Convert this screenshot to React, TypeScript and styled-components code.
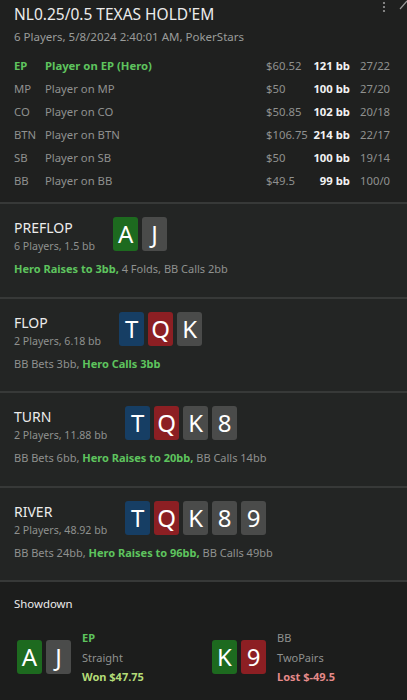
import React from "react";
import styled, { createGlobalStyle } from "styled-components";

const Global = createGlobalStyle`
  html, body { margin: 0; padding: 0; background: #1c1d1c; }
  body { font-family: "Noto Sans", "Open Sans", sans-serif; color: #e8e8e8; }
  * { box-sizing: border-box; }
`;

const Page = styled.div`
  width: 407px;
  height: 700px;
  overflow: hidden;
  background: #1c1d1c;
  display: flex;
  flex-direction: column;
`;

const Header = styled.header`
  position: relative;
  flex: none;
  background: #1f201f;
  padding: 5px 14px 0 14px;
  height: 204px;
  border-bottom: 2px solid #373938;
`;

const Title = styled.div`
  font-size: 15.5px;
  line-height: 18px;
  color: #ececec;
`;

const SubTitle = styled.div`
  font-size: 11.5px;
  line-height: 16px;
  color: #9a9c9a;
  margin-top: 6px;
`;

const Corner = styled.div`
  position: absolute;
  top: 0;
  right: 0;
  display: flex;
  align-items: flex-start;
  gap: 13px;
`;

const Table = styled.div`
  margin-top: 9px;
  display: grid;
  grid-template-columns: 31px 221px 40px 44px auto;
  grid-auto-rows: 23px;
  align-items: center;
  font-size: 11.3px;
`;

const Cell = styled.div<{ $tone?: "hero" | "dim" | "bold"; $right?: boolean; $pad?: number }>`
  color: ${(p) =>
    p.$tone === "hero" ? "#5ec45e" : p.$tone === "bold" ? "#f2f2f2" : "#8f918f"};
  font-weight: ${(p) => (p.$tone === "hero" || p.$tone === "bold" ? 700 : 400)};
  text-align: ${(p) => (p.$right ? "right" : "left")};
  padding-left: ${(p) => p.$pad ?? 0}px;
  white-space: nowrap;
`;

const Street = styled.section`
  flex: none;
  background: #232524;
  border-bottom: 2px solid #373938;
  padding: 13px 14px 0 14px;
  height: 94.5px;
`;

const StreetTop = styled.div`
  display: flex;
  align-items: flex-start;
  gap: 18px;
`;

const StreetInfo = styled.div`
  display: flex;
  flex-direction: column;
  padding-top: 2px;
`;

const StreetName = styled.div`
  font-size: 14px;
  line-height: 18px;
  color: #ececec;
`;

const StreetMeta = styled.div`
  font-size: 10.6px;
  line-height: 18px;
  color: #8f918f;
`;

const Cards = styled.div`
  display: flex;
  gap: 4px;
`;

const CardBox = styled.div<{ $c: string }>`
  width: 25px;
  height: 34px;
  border-radius: 3px;
  background: ${(p) => p.$c};
  color: #ffffff;
  font-size: 24px;
  line-height: 34px;
  text-align: center;
`;

const Action = styled.div`
  margin-top: 6px;
  font-size: 11px;
  line-height: 16px;
  color: #8f918f;
`;

const Hero = styled.span`
  color: #5ec45e;
  font-weight: 700;
`;

const Showdown = styled.section`
  background: #1c1d1c;
  flex: 1;
  padding: 14px 14px 0 14px;
`;

const ShowTitle = styled.div`
  font-size: 11.4px;
  line-height: 16px;
  color: #ececec;
`;

const ShowRow = styled.div`
  display: grid;
  grid-template-columns: 195px 1fr;
  margin-top: 16px;
  padding-left: 3px;
`;

const ShowHand = styled.div`
  display: flex;
  align-items: center;
  gap: 11px;
`;

const ShowText = styled.div`
  display: flex;
  flex-direction: column;
  font-size: 11px;
  line-height: 19.5px;
`;

const ShowLine = styled.div<{ $tone?: "hero" | "won" | "lost" }>`
  color: ${(p) =>
    p.$tone === "hero"
      ? "#5ec45e"
      : p.$tone === "won"
      ? "#b4dc78"
      : p.$tone === "lost"
      ? "#e58a8a"
      : "#8f918f"};
  font-weight: ${(p) => (p.$tone ? 700 : 400)};
`;

const COLORS: Record<string, string> = {
  g: "#1d6a1f",
  k: "#4a4b4a",
  b: "#163e64",
  r: "#8c1f23",
};

function Card({ v, c }: { v: string; c: string }) {
  return <CardBox $c={COLORS[c]}>{v}</CardBox>;
}

const players = [
  ["EP", "Player on EP (Hero)", "$60.52", "121 bb", "27/22", true],
  ["MP", "Player on MP", "$50", "100 bb", "27/20", false],
  ["CO", "Player on CO", "$50.85", "102 bb", "20/18", false],
  ["BTN", "Player on BTN", "$106.75", "214 bb", "22/17", false],
  ["SB", "Player on SB", "$50", "100 bb", "19/14", false],
  ["BB", "Player on BB", "$49.5", "99 bb", "100/0", false],
] as const;

const board: [string, string][] = [
  ["T", "b"],
  ["Q", "r"],
  ["K", "k"],
  ["8", "k"],
  ["9", "k"],
];

const streets = [
  {
    name: "PREFLOP",
    meta: "6 Players, 1.5 bb",
    cards: [["A", "g"], ["J", "k"]] as [string, string][],
    action: (
      <>
        <Hero>Hero Raises to 3bb,</Hero> 4 Folds, BB Calls 2bb
      </>
    ),
  },
  {
    name: "FLOP",
    meta: "2 Players, 6.18 bb",
    cards: board.slice(0, 3),
    action: (
      <>
        BB Bets 3bb, <Hero>Hero Calls 3bb</Hero>
      </>
    ),
  },
  {
    name: "TURN",
    meta: "2 Players, 11.88 bb",
    cards: board.slice(0, 4),
    action: (
      <>
        BB Bets 6bb, <Hero>Hero Raises to 20bb,</Hero> BB Calls 14bb
      </>
    ),
  },
  {
    name: "RIVER",
    meta: "2 Players, 48.92 bb",
    cards: board,
    action: (
      <>
        BB Bets 24bb, <Hero>Hero Raises to 96bb,</Hero> BB Calls 49bb
      </>
    ),
  },
];

export default function App() {
  return (
    <Page>
      <Global />
      <Header>
        <Corner>
          <svg width="4" height="12" viewBox="0 0 4 12" style={{ marginTop: 1 }}>
            <circle cx="2" cy="2" r="1.1" fill="#9a9a9a" />
            <circle cx="2" cy="6" r="1.1" fill="#9a9a9a" />
            <circle cx="2" cy="10" r="1.1" fill="#9a9a9a" />
          </svg>
          <svg width="8" height="10" viewBox="0 0 8 10">
            <path d="M1 9 L8 1" stroke="#9a9a9a" strokeWidth="1.2" fill="none" />
          </svg>
        </Corner>
        <Title>NL0.25/0.5 TEXAS HOLD'EM</Title>
        <SubTitle>6 Players, 5/8/2024 2:40:01 AM, PokerStars</SubTitle>
        <Table>
          {players.map(([pos, name, money, bb, stat, hero]) => (
            <React.Fragment key={pos}>
              <Cell $tone={hero ? "hero" : "dim"}>{pos}</Cell>
              <Cell $tone={hero ? "hero" : "dim"}>{name}</Cell>
              <Cell>{money}</Cell>
              <Cell $tone="bold" $right>
                {bb}
              </Cell>
              <Cell $pad={10}>{stat}</Cell>
            </React.Fragment>
          ))}
        </Table>
      </Header>
      {streets.map((s) => (
        <Street key={s.name}>
          <StreetTop>
            <StreetInfo>
              <StreetName>{s.name}</StreetName>
              <StreetMeta>{s.meta}</StreetMeta>
            </StreetInfo>
            <Cards>
              {s.cards.map(([v, c], i) => (
                <Card key={i} v={v} c={c} />
              ))}
            </Cards>
          </StreetTop>
          <Action>{s.action}</Action>
        </Street>
      ))}
      <Showdown>
        <ShowTitle>Showdown</ShowTitle>
        <ShowRow>
          <ShowHand>
            <Cards>
              <Card v="A" c="g" />
              <Card v="J" c="k" />
            </Cards>
            <ShowText>
              <ShowLine $tone="hero">EP</ShowLine>
              <ShowLine>Straight</ShowLine>
              <ShowLine $tone="won">Won $47.75</ShowLine>
            </ShowText>
          </ShowHand>
          <ShowHand>
            <Cards>
              <Card v="K" c="g" />
              <Card v="9" c="r" />
            </Cards>
            <ShowText>
              <ShowLine>BB</ShowLine>
              <ShowLine>TwoPairs</ShowLine>
              <ShowLine $tone="lost">Lost $-49.5</ShowLine>
            </ShowText>
          </ShowHand>
        </ShowRow>
      </Showdown>
    </Page>
  );
}
